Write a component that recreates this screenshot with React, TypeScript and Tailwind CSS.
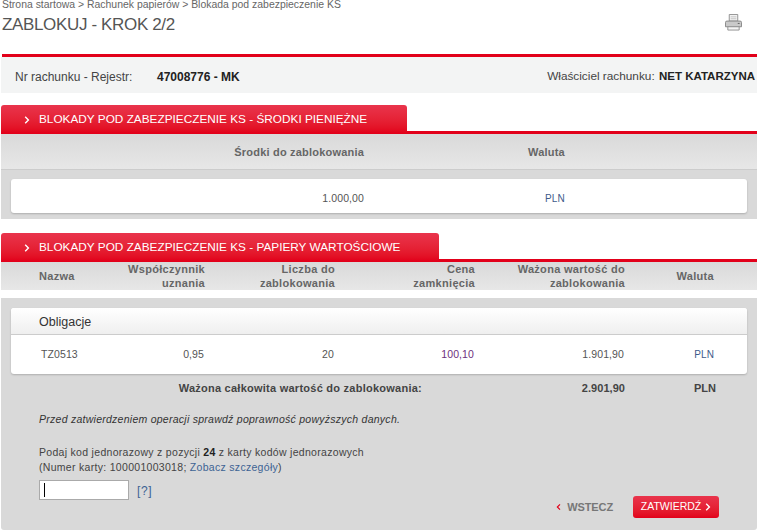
import * as React from 'react';

const colsHead = 'grid grid-cols-[80px_86px_130px_140px_150px_89px]';
const colsRow = 'grid grid-cols-[78px_85px_130px_140px_150px_90px]';
const colsTotal = 'grid grid-cols-[80px_86px_130px_140px_150px_91px]';

function Chevron({ className }: { className?: string }) {
  return (
    <svg viewBox="0 0 6 8" className={className} fill="none" stroke="currentColor" strokeWidth="1.4">
      <path d="M1.2 .8 4.4 4 1.2 7.2" />
    </svg>
  );
}

function PrinterIcon() {
  return (
    <svg viewBox="0 0 18 18" className="h-[17px] w-[17px]">
      <path d="M4.5 .5h9v7h-9z" fill="#f2f2f2" stroke="#8f8f8f" />
      <path d="M6 3h6M6 5h6" stroke="#c4c4c4" />
      <path d="M2 7.5h14a1.5 1.5 0 0 1 1.5 1.5v4.5H.5V9A1.5 1.5 0 0 1 2 7.5z" fill="#c9c9c9" stroke="#868686" />
      <path d="M3 13.5h12v3.500H3z" fill="#f4f4f4" stroke="#8f8f8f" />
      <path d="M13.500 10h2" stroke="#5f5f5f" />
    </svg>
  );
}

function SectionTab({ title, width }: { title: string; width: string }) {
  return (
    <div className="border-b-[3px] border-[#e2001a] h-[29px]">
      <div className={`${width} flex h-[28px] items-center rounded-t-[3px] bg-gradient-to-b from-[#e9344c] to-[#e2001a] pl-[23px] pt-[1px] text-white`}>
        <Chevron className="h-[8px] w-[6px]" />
        <span className="ml-[9px] text-[11.800px]">{title}</span>
      </div>
    </div>
  );
}

export default function App() {
  return (
    <div className="h-[532px] w-[759px] overflow-hidden bg-white pl-px pr-[2px] font-['Liberation_Sans',Arial,sans-serif] text-[11px] text-[#555]">
      <div className="pl-px text-[10.450px] leading-[10px] text-[#666]">Strona startowa &gt; Rachunek papierów &gt; Blokada pod zabezpieczenie KS</div>

      <div className="flex h-[44px] items-start justify-between pl-px">
        <h1 className="mt-[5px] text-[17px] leading-[20px] tracking-[-0.35px] text-[#555]">ZABLOKUJ - KROK 2/2</h1>
        <div className="mt-[4px] mr-[15px]"><PrinterIcon /></div>
      </div>

      <div className="ml-px h-[3px] bg-[#e2001a]" />
      <div className="flex h-[36px] items-center justify-between bg-[#f3f4f4] pl-[14px] pr-[2px] pt-[3px] text-[12px] text-[#444]">
        <div className="flex">
          <span className="w-[142px]">Nr rachunku - Rejestr:</span>
          <span className="font-bold text-[#222]">47008776 - MK</span>
        </div>
        <div className="text-[11.800px]">
          Właściciel rachunku: <span className="ml-[1px] text-[11.500px] font-bold text-[#222]">NET KATARZYNA</span>
        </div>
      </div>

      <div className="mt-[12px]">
        <SectionTab title="BLOKADY POD ZABEZPIECZENIE KS - ŚRODKI PIENIĘŻNE" width="w-[406px]" />
      </div>
      <div className="flex h-[36px] items-center border-b border-[#ccc] bg-gradient-to-b from-[#d9d9d9] to-[#e7e7e7] pt-[1px] font-bold tracking-[0.2px] text-[#666]">
        <span className="w-[363px] text-right">Środki do zablokowania</span>
        <span className="ml-[164px]">Waluta</span>
      </div>
      <div className="h-[49px] bg-[#d9d9d9] px-[10px] pt-[9px]">
        <div className="flex h-[34px] items-center rounded-[3px] bg-white pt-[5px] text-[10.500px] tracking-[0.1px] shadow-[0_1px_2px_rgba(0,0,0,0.2)]">
          <span className="w-[353px] text-right">1.000,00</span>
          <span className="ml-[181px] text-[10px] text-[#3d5a8a]">PLN</span>
        </div>
      </div>

      <div className="mt-[14px]">
        <SectionTab title="BLOKADY POD ZABEZPIECZENIE KS - PAPIERY WARTOŚCIOWE" width="w-[438px]" />
      </div>
      <div className={`${colsHead} h-[28px] items-center bg-gradient-to-b from-[#d9d9d9] to-[#e7e7e7] pl-[38px] font-bold leading-[14px] tracking-[0.3px] text-[#666]`}>
        <span>Nazwa</span>
        <span className="text-right">Współczynnik uznania</span>
        <span className="text-right">Liczba do zablokowania</span>
        <span className="text-right">Cena<br />zamknięcia</span>
        <span className="text-right">Ważona wartość do zablokowania</span>
        <span className="text-right">Waluta</span>
      </div>

      <div className="mt-[8px] h-[232px] rounded-b-[3px] bg-[#d9d9d9] pt-[10px]">
        <div className="mx-[10px] overflow-hidden rounded-[3px] bg-white shadow-[0_1px_2px_rgba(0,0,0,0.2)]">
          <div className="flex h-[27px] items-center border-b border-[#ccc] bg-gradient-to-b from-white to-[#efefef] pl-[28px] pt-[3px] text-[12.500px] text-[#333]">Obligacje</div>
          <div className={`${colsRow} h-[39px] items-center pl-[30px] text-[10.500px] tracking-[0.1px]`}>
            <span>TZ0513</span>
            <span className="text-right">0,95</span>
            <span className="text-right">20</span>
            <span className="text-right text-[#6e2f7d]">100,10</span>
            <span className="text-right">1.901,90</span>
            <span className="text-right text-[10px] text-[#3d5a8a]">PLN</span>
          </div>
        </div>

        <div className={`${colsTotal} mt-[8px] pl-[38px] font-bold leading-[13px] text-[#444]`}>
          <span className="col-span-4 w-[383px] text-right tracking-[0.25px]">Ważona całkowita wartość do zablokowania:</span>
          <span className="text-right tracking-[0.05px]">2.901,90</span>
          <span className="text-right">PLN</span>
        </div>

        <div className="px-[38px]">
          <p className="mt-[18px] text-[10.500px] italic leading-[13px] tracking-[0.26px] text-[#333]">Przed zatwierdzeniem operacji sprawdź poprawność powyższych danych.</p>
          <p className="mt-[19px] text-[10.500px] leading-[15px] tracking-[0.3px] text-[#444]">
            Podaj kod jednorazowy z pozycji <b className="text-[#222]">24</b> z karty kodów jednorazowych
            <br />
            (Numer karty: 100001003018; <span className="text-[#3d6394]">Zobacz szczegóły</span>)
          </p>
          <div className="mt-[4px] flex items-end justify-between">
            <div className="flex items-center">
              <div className="relative">
                <input readOnly className="block h-[20px] w-[90px] border border-[#aaa] bg-white" />
                <span className="absolute left-[5px] top-[3px] h-[14px] w-px bg-black" />
              </div>
              <span className="ml-[8px] mt-[3px] text-[12px] tracking-[0.6px] text-[#3d6394]">[?]</span>
            </div>
            <div className="mb-[-18px] flex items-center">
              <Chevron className="h-[8px] w-[5px] rotate-180 text-[#e2001a]" />
              <span className="ml-[6px] font-bold tracking-[-0.1px] text-[#777]">WSTECZ</span>
              <button className="ml-[20px] flex h-[22px] w-[86px] items-center justify-center rounded-[3px] bg-gradient-to-b from-[#e9344c] to-[#e2001a] text-[10.500px] text-white">
                ZATWIERDŹ
                <Chevron className="ml-[4px] h-[8px] w-[6px]" />
              </button>
            </div>
          </div>
        </div>
      </div>
    </div>
  );
}
